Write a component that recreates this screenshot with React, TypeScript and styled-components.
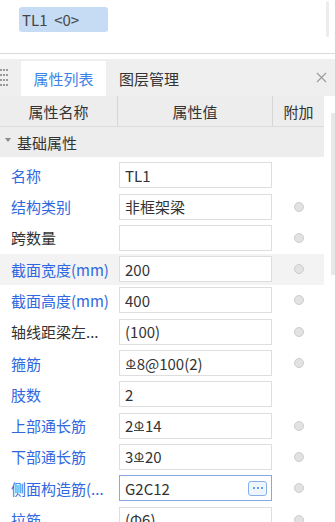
import { createGlobalStyle, styled } from "styled-components";

const GlobalStyle = createGlobalStyle`
  html, body {
    margin: 0;
    padding: 0;
    background: #ffffff;
  }
  body {
    width: 335px;
    height: 522px;
    overflow: hidden;
    font-family: "Noto Sans CJK SC", "Microsoft YaHei", sans-serif;
    color: #333333;
  }
`;

const Page = styled.div`
  width: 335px;
  height: 522px;
  overflow: hidden;
`;

const TopArea = styled.div`
  height: 53px;
  display: flex;
  align-items: flex-start;
  padding-left: 19px;
  box-sizing: border-box;
`;

const Chip = styled.div`
  margin-top: 7px;
  width: 89px;
  height: 25px;
  border-radius: 3px;
  background: #c6dcf4;
  color: #454545;
  font-size: 15px;
  line-height: 25px;
  padding-left: 3px;
  box-sizing: border-box;
  white-space: pre;
`;

const Spacer = styled.div`
  flex: 1;
`;

const TopScroll = styled.div`
  margin-top: 1px;
  margin-right: 6px;
  width: 3px;
  height: 36px;
  border-radius: 2px;
  background: #ececec;
`;

const Divider = styled.div`
  height: 6px;
  border-top: 1px solid #dadada;
  box-sizing: border-box;
`;

const TabBar = styled.div`
  height: 37px;
  display: flex;
  align-items: stretch;
  background: #efefef;
`;

const Handle = styled.div`
  width: 21px;
  display: flex;
  align-items: center;
`;

const Tab = styled.div<{ $active?: boolean }>`
  display: flex;
  align-items: center;
  justify-content: center;
  margin-top: 2px;
  font-size: 15px;
  padding: ${(p) => (p.$active ? "0" : "0 13px")};
  width: ${(p) => (p.$active ? "85px" : "auto")};
  background: ${(p) => (p.$active ? "#ffffff" : "transparent")};
  color: ${(p) => (p.$active ? "#3d82e6" : "#333333")};
`;

const Close = styled.div`
  width: 24px;
  display: flex;
  align-items: center;
  justify-content: center;
  padding-right: 2px;
`;

const Body = styled.div`
  display: flex;
`;

const Main = styled.div`
  width: 324px;
  display: flex;
  flex-direction: column;
`;

const SideScroll = styled.div`
  margin-left: 7px;
  margin-top: 17px;
  width: 4px;
  height: 162px;
  background: #e8e8e8;
`;

const Columns = `
  display: grid;
  grid-template-columns: 118px 155px 51px;
`;

const Header = styled.div`
  ${Columns}
  height: 31px;
  background: #ededed;
  border-bottom: 1px solid #dcdcdc;
  box-sizing: border-box;
`;

const HeadCell = styled.div<{ $last?: boolean }>`
  display: flex;
  align-items: center;
  justify-content: center;
  font-size: 15px;
  color: #333333;
  border-right: ${(p) => (p.$last ? "none" : "1px solid #d6d6d6")};
`;

const GroupRow = styled.div`
  height: 30px;
  display: flex;
  align-items: center;
  background: #ededed;
  font-size: 15px;
  color: #333333;
  padding-left: 5px;
  gap: 6px;
`;

const Caret = styled.span`
  width: 0;
  height: 0;
  border-left: 3px solid transparent;
  border-right: 3px solid transparent;
  border-top: 4px solid #8a8a8a;
  margin-top: -4px;
`;

const Rows = styled.div`
  padding-top: 2.65px;
`;

const Row = styled.div<{ $hover?: boolean }>`
  ${Columns}
  height: 31.3px;
  align-items: center;
  background: ${(p) => (p.$hover ? "#f3f3f3" : "transparent")};
`;

const Label = styled.div<{ $plain?: boolean }>`
  padding-left: 11px;
  font-size: 15px;
  white-space: nowrap;
  overflow: hidden;
  color: ${(p) => (p.$plain ? "#333333" : "#2f68e0")};
`;

const ValueBox = styled.div<{ $focus?: boolean }>`
  margin-left: 1px;
  width: 153px;
  height: 26px;
  box-sizing: border-box;
  background: #ffffff;
  border: 1px solid ${(p) => (p.$focus ? "#86a9e6" : "#dedede")};
  display: flex;
  align-items: center;
  padding-left: 5px;
  padding-right: 4px;
  font-size: 15px;
  color: #333333;
  white-space: nowrap;
`;

const ValueText = styled.span`
  flex: 1;
`;

const MoreButton = styled.div`
  width: 19px;
  height: 15px;
  box-sizing: border-box;
  border: 1px solid #86b0ea;
  border-radius: 3px;
  background: #eef5fd;
  display: flex;
  align-items: center;
  justify-content: center;
  gap: 2px;
`;

const Dot = styled.span`
  width: 2px;
  height: 2px;
  border-radius: 1px;
  background: #3b82e6;
`;

const Extra = styled.div`
  display: flex;
  justify-content: center;
`;

const Radio = styled.span`
  width: 10px;
  height: 10px;
  border-radius: 50%;
  box-sizing: border-box;
  background: #e2e2e2;
  border: 1px solid #cdcdcd;
`;

const Rebar = styled.span`
  display: inline-block;
  font-size: 12px;
  line-height: 11px;
  margin: 0 1px;
  vertical-align: 2px;
  border-bottom: 1px solid #444444;
`;

interface IProp {
  name: string;
  value: React.ReactNode;
  plain?: boolean;
  radio?: boolean;
  hover?: boolean;
  focus?: boolean;
}

const props: IProp[] = [
  { name: "名称", value: "TL1" },
  { name: "结构类别", value: "非框架梁", radio: true },
  { name: "跨数量", value: "", plain: true, radio: true },
  { name: "截面宽度(mm)", value: "200", radio: true, hover: true },
  { name: "截面高度(mm)", value: "400", radio: true },
  { name: "轴线距梁左...", value: "(100)", plain: true, radio: true },
  { name: "箍筋", value: <><Rebar>Φ</Rebar>8@100(2)</>, radio: true },
  { name: "肢数", value: "2" },
  { name: "上部通长筋", value: <>2<Rebar>Φ</Rebar>14</>, radio: true },
  { name: "下部通长筋", value: <>3<Rebar>Φ</Rebar>20</>, radio: true },
  { name: "侧面构造筋(...", value: "G2C12", radio: true, focus: true },
  { name: "拉筋", value: "(Φ6)", radio: true },
];

function HandleDots() {
  const dots = [];
  for (let c = 0; c < 3; c++) {
    for (let r = 0; r < 4; r++) {
      dots.push(<rect key={`${c}-${r}`} x={c * 3} y={r * 5} width="2" height="2" fill="#9a9a9a" />);
    }
  }
  return (
    <svg width="9" height="18" viewBox="0 0 9 18">
      {dots}
    </svg>
  );
}

export default function App() {
  return (
    <Page>
      <GlobalStyle />
      <TopArea>
        <Chip>{"TL1  <0>"}</Chip>
        <Spacer />
        <TopScroll />
      </TopArea>
      <Divider />
      <TabBar>
        <Handle>
          <HandleDots />
        </Handle>
        <Tab $active>属性列表</Tab>
        <Tab>图层管理</Tab>
        <Spacer />
        <Close>
          <svg width="11" height="11" viewBox="0 0 11 11">
            <path d="M1 1 L10 10 M10 1 L1 10" stroke="#9c9c9c" strokeWidth="1.2" />
          </svg>
        </Close>
      </TabBar>
      <Body>
        <Main>
          <Header>
            <HeadCell>属性名称</HeadCell>
            <HeadCell>属性值</HeadCell>
            <HeadCell $last>附加</HeadCell>
          </Header>
          <GroupRow>
            <Caret />
            基础属性
          </GroupRow>
          <Rows>
            {props.map((p) => (
              <Row key={p.name} $hover={p.hover}>
                <Label $plain={p.plain}>{p.name}</Label>
                <ValueBox $focus={p.focus}>
                  <ValueText>{p.value}</ValueText>
                  {p.focus && (
                    <MoreButton>
                      <Dot />
                      <Dot />
                      <Dot />
                    </MoreButton>
                  )}
                </ValueBox>
                <Extra>{p.radio && <Radio />}</Extra>
              </Row>
            ))}
          </Rows>
        </Main>
        <SideScroll />
      </Body>
    </Page>
  );
}
